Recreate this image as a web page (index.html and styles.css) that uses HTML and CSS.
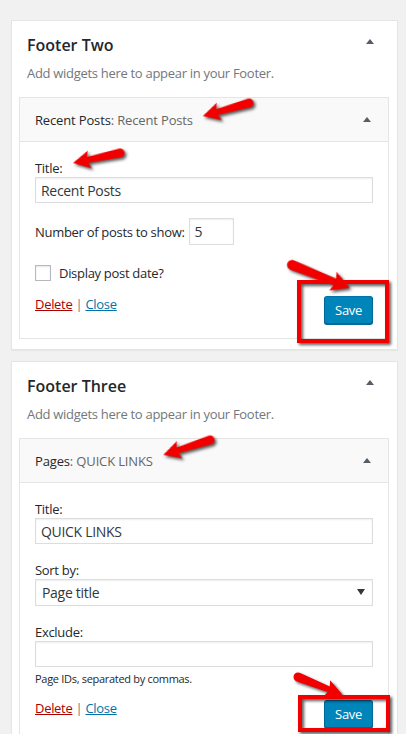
FILE: index.html
```html
<!DOCTYPE html>
<html>
  <head>
    <meta charset="UTF-8"/>
    <title>Widgets: Footer Two and Footer Three</title>
    <link rel="stylesheet" href="styles.css">
  </head>
  <body>
    <section class="sidebar">
      <div class="sidebar-name">
        <h2>Footer Two</h2>
        <svg class="toggle" width="8" height="5" viewBox="0 0 8 5"><polygon points="4,0 8,5 0,5"/></svg>
      </div>
      <p class="sidebar-desc">Add widgets here to appear in your Footer.</p>

      <div class="widget">
        <div class="widget-top">
          <h3>Recent Posts<span class="in-title">: Recent Posts</span></h3>
          <svg class="toggle" width="8" height="5" viewBox="0 0 8 5"><polygon points="4,0 8,5 0,5"/></svg>
        </div>
        <div class="widget-inside">
          <label class="field-label">Title:</label>
          <input class="text-input" type="text" value="Recent Posts">

          <div class="inline-row">
            <label>Number of posts to show:</label>
            <input class="text-input tiny" type="text" value="5">
          </div>

          <div class="check-row">
            <span class="checkbox"></span>
            <label>Display post date?</label>
          </div>

          <div class="actions">
            <div class="links"><a class="delete" href="#">Delete</a> | <a class="close" href="#">Close</a></div>
            <button class="button-primary">Save</button>
          </div>
        </div>
      </div>
    </section>

    <section class="sidebar">
      <div class="sidebar-name">
        <h2>Footer Three</h2>
        <svg class="toggle" width="8" height="5" viewBox="0 0 8 5"><polygon points="4,0 8,5 0,5"/></svg>
      </div>
      <p class="sidebar-desc">Add widgets here to appear in your Footer.</p>

      <div class="widget">
        <div class="widget-top">
          <h3>Pages<span class="in-title">: QUICK LINKS</span></h3>
          <svg class="toggle" width="8" height="5" viewBox="0 0 8 5"><polygon points="4,0 8,5 0,5"/></svg>
        </div>
        <div class="widget-inside">
          <label class="field-label">Title:</label>
          <input class="text-input" type="text" value="QUICK LINKS">

          <label class="field-label spaced">Sort by:</label>
          <div class="select-wrap">
            <select class="select-input">
              <option>Page title</option>
              <option>Page order</option>
              <option>Page ID</option>
            </select>
            <svg class="select-arrow" width="8" height="6" viewBox="0 0 8 6"><polygon points="0,0 8,0 4,6"/></svg>
          </div>

          <label class="field-label spaced">Exclude:</label>
          <input class="text-input" type="text" value="">
          <p class="help">Page IDs, separated by commas.</p>

          <div class="actions">
            <div class="links"><a class="delete" href="#">Delete</a> | <a class="close" href="#">Close</a></div>
            <button class="button-primary">Save</button>
          </div>
        </div>
      </div>
    </section>

    <!-- red annotations drawn over the screenshot -->
    <svg class="marks" width="406" height="734" viewBox="0 0 406 734">
      <g class="ink">
        <path transform="translate(249 103) rotate(164.2)" d="M0,-4.5 L33,-3 L31,-9 L48,0 L31,9 L33,3 L0,4.5 A4.5,4.5 0 0 1 0,-4.5 Z"/>
        <path transform="translate(120 153) rotate(168)" d="M0,-4.5 L33,-3 L31,-9 L48,0 L31,9 L33,3 L0,4.5 A4.5,4.5 0 0 1 0,-4.5 Z"/>
        <path transform="translate(292 265) rotate(21.6)" d="M0,-5 L46,-3.5 L44,-10 L62,0 L44,10 L46,3.5 L0,5 A5,5 0 0 1 0,-5 Z"/>
        <path transform="translate(210 440) rotate(162.3)" d="M0,-4.5 L34,-3 L32,-9 L49,0 L32,9 L34,3 L0,4.5 A4.5,4.5 0 0 1 0,-4.5 Z"/>
        <path transform="translate(298 677) rotate(21.8)" d="M0,-4.5 L33,-3 L31,-9 L48,0 L31,9 L33,3 L0,4.5 A4.5,4.5 0 0 1 0,-4.5 Z"/>
        <rect class="box" x="299" y="282" width="88" height="59"/>
        <rect class="box" x="300" y="697" width="88" height="33"/>
      </g>
    </svg>
  </body>
</html>
```

FILE: styles.css
```css
html, body { padding: 0; margin: 0; }
body {
    position: relative;
    background: #f1f1f1;
    padding-top: 20px;
    font-family: "Open Sans", "Liberation Sans", sans-serif;
    font-size: 13px;
    color: #23282d;
    letter-spacing: -0.3px;
    height: 714px;
    overflow: hidden;
}

.sidebar {
    margin: 0 8px 11px 11px;
    padding-bottom: 10px;
    background: #fff;
    border: 1px solid #e5e5e5;
    box-shadow: 0 1px 1px rgba(0,0,0,.04);
}
.sidebar-name {
    display: flex;
    justify-content: space-between;
    padding: 12px 23px 0 15px;
}
.sidebar-name h2 {
    margin: 0;
    font-size: 16px;
    font-weight: 600;
    line-height: 24px;
    letter-spacing: 0;
}
.sidebar-name .toggle { margin-top: 6px; }
.toggle { fill: #555d66; flex: none; }

.sidebar-desc {
    margin: 7px 15px 15px;
    line-height: 18px;
    color: #72777c;
}

.widget {
    margin: 0 8px 0 7px;
    border: 1px solid #e5e5e5;
}
.widget-top {
    display: flex;
    justify-content: space-between;
    align-items: center;
    height: 43px;
    padding: 0 17px 0 15px;
    background: #f9f9f9;
    border-bottom: 1px solid #e5e5e5;
}
.widget-top h3 {
    margin: 0;
    font-size: 13px;
    font-weight: 400;
    line-height: 18px;
    letter-spacing: -0.15px;
}
.in-title { color: #666; }

.widget-inside {
    padding: 17px 15px 14px;
}
.field-label {
    display: block;
    line-height: 18px;
}
.field-label.spaced { margin-top: 17px; }

.text-input, .select-input {
    display: block;
    box-sizing: border-box;
    width: 100%;
    height: 26px;
    margin: 0;
    padding: 0 5px;
    border: 1px solid #ddd;
    box-shadow: inset 0 1px 2px rgba(0,0,0,.07);
    background: #fff;
    font-family: inherit;
    font-size: 14px;
    letter-spacing: -0.3px;
    color: #32373c;
    outline: none;
}
.text-input.tiny {
    width: 45px;
    height: 27px;
}

.inline-row {
    display: flex;
    align-items: center;
    gap: 4px;
    margin-top: 15px;
}
.inline-row label { line-height: 18px; }

.check-row {
    display: flex;
    align-items: center;
    gap: 8px;
    margin-top: 19px;
}
.checkbox {
    width: 14px;
    height: 14px;
    border: 1px solid #b4b9be;
    box-shadow: inset 0 1px 2px rgba(0,0,0,.1);
    background: #fff;
}

.select-wrap { position: relative; }
.select-input {
    appearance: none;
    -webkit-appearance: none;
    height: 27px;
    padding-left: 6px;
    border-radius: 0;
}
.select-arrow {
    position: absolute;
    right: 8px;
    top: 10px;
    fill: #32373c;
}

.help {
    margin: 5px 0 0;
    font-size: 11px;
    line-height: 14px;
    color: #23282d;
}

.actions {
    display: flex;
    justify-content: space-between;
    align-items: flex-start;
    margin-top: 14px;
}
.links {
    margin-top: -1px;
    line-height: 18px;
    color: #72777c;
}
.links a { text-decoration: underline; }
.delete { color: #a00; }
.close { color: #0073aa; }

.button-primary {
    height: 28px;
    padding: 0 10px 1px;
    background: #0085ba;
    border: 1px solid #0073aa;
    border-color: #0073aa #006799 #006799;
    border-radius: 3px;
    box-shadow: 0 1px 0 #006799;
    color: #fff;
    font-family: inherit;
    font-size: 13px;
    letter-spacing: -0.3px;
    line-height: 26px;
}

.marks {
    position: absolute;
    top: 0;
    left: 0;
    pointer-events: none;
}
.ink {
    fill: #f20000;
    filter: drop-shadow(2px 2px 1.5px rgba(0,0,0,.65));
}
.ink .box {
    fill: none;
    stroke: #f20000;
    stroke-width: 4;
}
```
